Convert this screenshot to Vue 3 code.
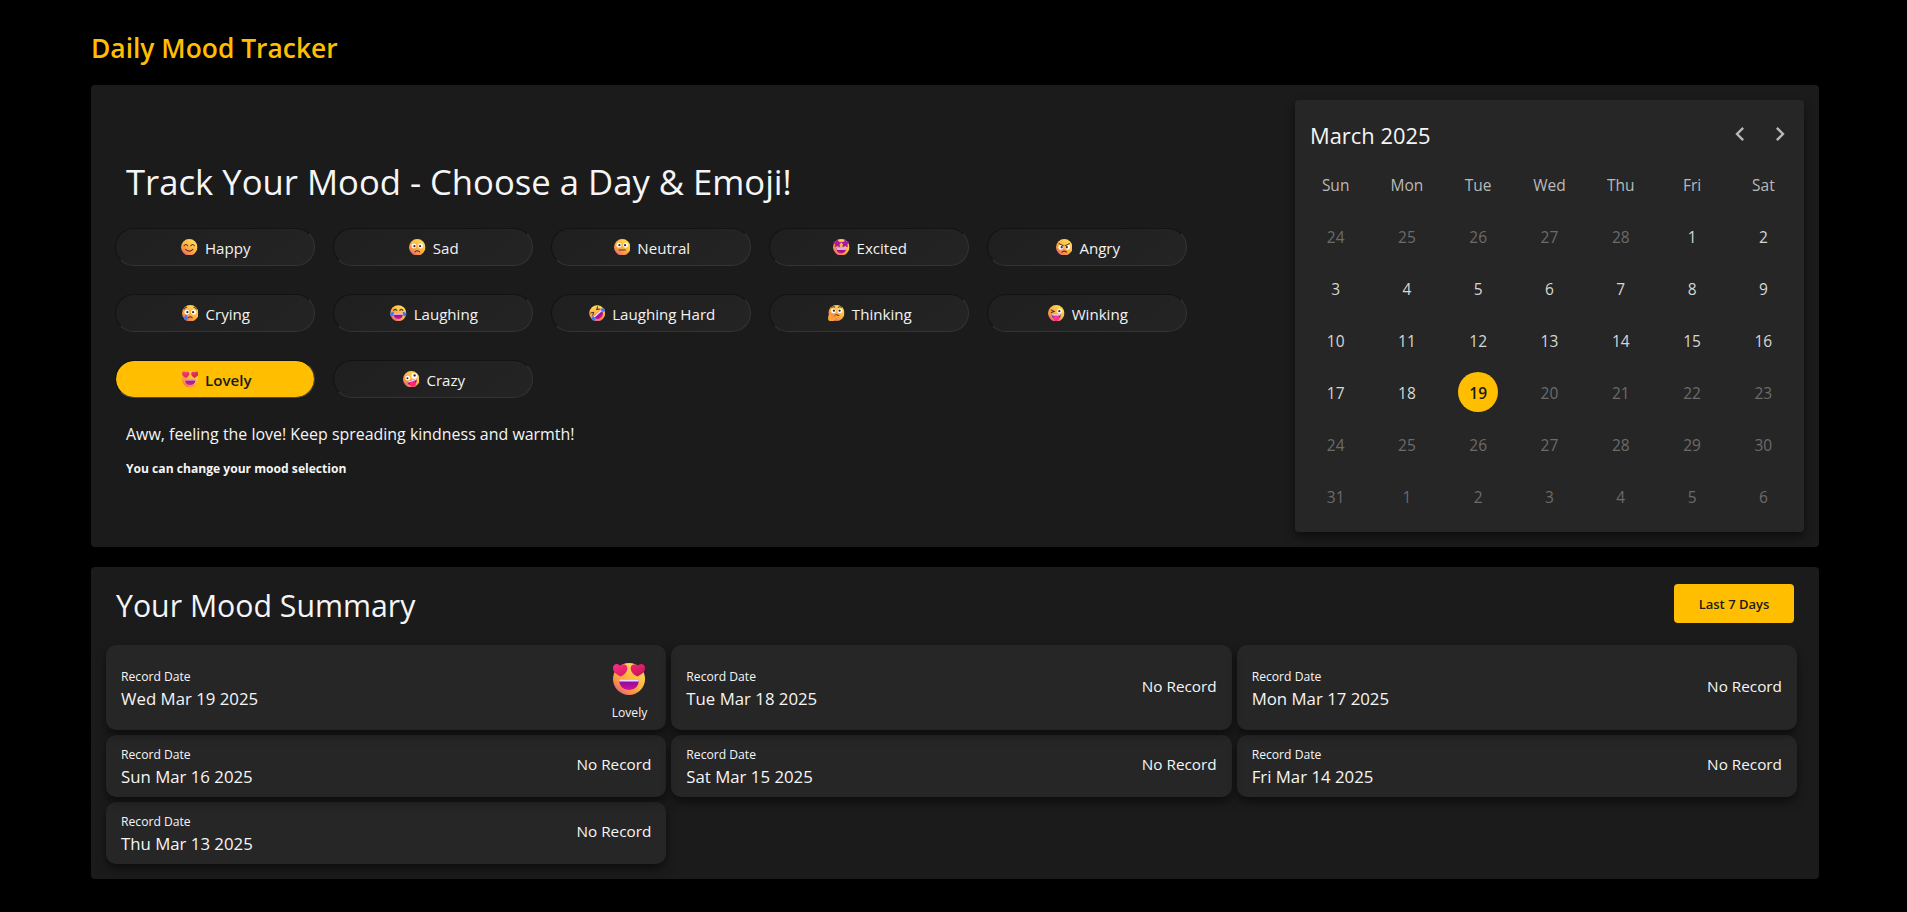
<script setup>
import { ref } from 'vue'

const moods = [
  { id: 'happy', name: 'Happy' },
  { id: 'sad', name: 'Sad' },
  { id: 'neutral', name: 'Neutral' },
  { id: 'excited', name: 'Excited' },
  { id: 'angry', name: 'Angry' },
  { id: 'crying', name: 'Crying' },
  { id: 'laughing', name: 'Laughing' },
  { id: 'rofl', name: 'Laughing Hard' },
  { id: 'thinking', name: 'Thinking' },
  { id: 'winking', name: 'Winking' },
  { id: 'lovely', name: 'Lovely' },
  { id: 'crazy', name: 'Crazy' }
]
const selected = ref('lovely')

const weekdays = ['Sun', 'Mon', 'Tue', 'Wed', 'Thu', 'Fri', 'Sat']

const days = Array.from({ length: 42 }, (_, i) => {
  const n = i - 4
  if (n < 1) return { label: n + 28, off: true }
  if (n > 31) return { label: n - 31, off: true }
  return { label: n, off: n > 19, today: n === 19 }
})

const records = [
  { date: 'Wed Mar 19 2025', mood: { id: 'lovely', name: 'Lovely' } },
  { date: 'Tue Mar 18 2025' },
  { date: 'Mon Mar 17 2025' },
  { date: 'Sun Mar 16 2025' },
  { date: 'Sat Mar 15 2025' },
  { date: 'Fri Mar 14 2025' },
  { date: 'Thu Mar 13 2025' }
]
</script>

<template>
  <div class="page">
    <svg class="defs" width="0" height="0" aria-hidden="true">
      <defs>
        <linearGradient id="skin" x1="0.85" y1="0.1" x2="0.2" y2="0.95">
          <stop offset="0" stop-color="#ffdf5c" />
          <stop offset="0.5" stop-color="#ffb23e" />
          <stop offset="0.8" stop-color="#f98c49" />
          <stop offset="1" stop-color="#e0608a" />
        </linearGradient>
        <linearGradient id="mouth" x1="0" y1="0" x2="0" y2="1">
          <stop offset="0" stop-color="#7a0c9c" />
          <stop offset="1" stop-color="#d1109a" />
        </linearGradient>
        <linearGradient id="heart" x1="0" y1="0" x2="1" y2="1">
          <stop offset="0" stop-color="#ff2e8a" />
          <stop offset="1" stop-color="#c4124e" />
        </linearGradient>
        <symbol id="face-happy" viewBox="0 0 32 32">
          <circle cx="16" cy="16" r="16" fill="url(#skin)" />
          <path d="M6 13q3.500-5 7 0M19 13q3.500-5 7 0M9 20q7 7 14 0" class="line" />
        </symbol>
        <symbol id="face-sad" viewBox="0 0 32 32">
          <circle cx="16" cy="16" r="16" fill="url(#skin)" />
          <circle cx="9.500" cy="13.500" r="4.800" fill="#fff" /><circle cx="22.500" cy="13.500" r="4.800" fill="#fff" />
          <circle cx="10.500" cy="14" r="2.200" fill="#402a32" /><circle cx="21.500" cy="14" r="2.200" fill="#402a32" />
          <path d="M11.500 25q4.500-4.500 9 0" class="line" />
        </symbol>
        <symbol id="face-neutral" viewBox="0 0 32 32">
          <circle cx="16" cy="16" r="16" fill="url(#skin)" />
          <circle cx="9.500" cy="12" r="4.800" fill="#fff" /><circle cx="22.500" cy="12" r="4.800" fill="#fff" />
          <circle cx="10.500" cy="12" r="2.200" fill="#402a32" /><circle cx="21.500" cy="12" r="2.200" fill="#402a32" />
          <path d="M10 21.500h12" class="line" />
        </symbol>
        <symbol id="face-excited" viewBox="0 0 32 32">
          <circle cx="16" cy="16" r="16" fill="url(#skin)" />
          <path d="M8.500 1l2.400 4.600 5 .8-3.500 3.800.8 5.300-4.700-2.300-4.800 2.300.8-5.300L0 6.400l5.800-.8zM23.500 1l2.700 4.600 5.800.8-4.500 3.800.8 5.300-4.800-2.300-4.700 2.300.8-5.300-3.500-3.800 5-.8z" fill="#a718ad" stroke="#a718ad" stroke-linejoin="round" />
          <path d="M6.500 18h19q-1 10-9.500 10t-9.500-10z" fill="url(#mouth)" />
          <path d="M7 18h18v2.800H7.600z" fill="#f2dcff" />
        </symbol>
        <symbol id="face-angry" viewBox="0 0 32 32">
          <circle cx="16" cy="16" r="16" fill="url(#skin)" />
          <circle cx="9.500" cy="16" r="4.800" fill="#fff" /><circle cx="22.500" cy="16" r="4.800" fill="#fff" />
          <circle cx="11" cy="16" r="2.200" fill="#402a32" /><circle cx="21" cy="16" r="2.200" fill="#402a32" />
          <path d="M6 9l8 4M26 9l-8 4M11.500 25.500q4.500-4 9 0" class="line" />
        </symbol>
        <symbol id="face-crying" viewBox="0 0 32 32">
          <circle cx="16" cy="16" r="16" fill="url(#skin)" />
          <circle cx="9.500" cy="14" r="4.800" fill="#fff" /><circle cx="22.500" cy="14" r="4.800" fill="#fff" />
          <circle cx="10.500" cy="14" r="2.200" fill="#402a32" /><circle cx="21.500" cy="14" r="2.200" fill="#402a32" />
          <path d="M4 8q2-3 5-3.500M28 8q-2-3-5-3.500M12.500 24.500q3.500-3.500 7 0" class="line" />
          <path d="M7.500 18q5 6.500 3.500 9.500a3.900 3.900 0 0 1-7 0Q3 24.500 7.500 18z" fill="#3c77f2" />
        </symbol>
        <symbol id="face-laughing" viewBox="0 0 32 32">
          <circle cx="16" cy="16" r="15.500" fill="url(#skin)" />
          <path d="M7 10.500q3-4 6 0M19 10.500q3-4 6 0" class="line" />
          <path d="M7 16h18q0 11-9 11T7 16z" fill="url(#mouth)" />
          <path d="M7 16h18v3H7z" fill="#f7dcf0" />
          <path d="M7 13q-8 1.500-7 6 1 4 4.500 2.500T7 13zM25 13q8 1.500 7 6-1 4-4.500 2.500T25 13z" fill="#3c77f2" />
        </symbol>
        <symbol id="face-rofl" viewBox="0 0 32 32">
          <g transform="rotate(-42 16 16)">
            <circle cx="16" cy="16" r="15.500" fill="url(#skin)" />
            <path d="M7 7l5 3-5 3M25 7l-5 3 5 3" class="line" />
            <path d="M6 16h20q0 11-10 11T6 16z" fill="url(#mouth)" />
            <path d="M6 16h20v3H6z" fill="#f7dcf0" />
            <path d="M6 14q-7 2-6 6 1 4 4.500 2.500T6 14zM26 14q7 2 6 6-1 4-4.500 2.500T26 14z" fill="#3c77f2" />
          </g>
        </symbol>
        <symbol id="face-thinking" viewBox="0 0 32 32">
          <circle cx="16.500" cy="15.500" r="15.500" fill="url(#skin)" />
          <circle cx="10.500" cy="11.500" r="4.600" fill="#fff" /><circle cx="23" cy="11.500" r="4.600" fill="#fff" />
          <circle cx="11.500" cy="11" r="2.200" fill="#402a32" /><circle cx="22.500" cy="11" r="2.200" fill="#402a32" />
          <path d="M7 4.500q3-2 6-.5M20 4.500q3-2 6 0M13 20q4-2.500 8 .5" class="line" />
          <path d="M3 18q3-2 3.500 3.500l10.500-1q2 2-1 3.500l-3 1q2 7-6 7-7 0-7-6.500 0-5 3-7.500z" fill="#ffa336" />
          <path d="M7 23l9-1.500" stroke="#e57a3b" stroke-width="1" fill="none" />
        </symbol>
        <symbol id="face-winking" viewBox="0 0 32 32">
          <circle cx="16" cy="16" r="16" fill="url(#skin)" />
          <circle cx="22.500" cy="12" r="4.800" fill="#fff" /><circle cx="22" cy="12" r="2.200" fill="#402a32" />
          <path d="M6 9.500l6 3-5.500 2" class="line" />
          <path d="M7 18h18q0 9-9 9t-9-9z" fill="#74217b" />
          <path d="M10.500 20h11v6.500q0 4.500-5.500 4.500t-5.500-4.500z" fill="#ff3299" />
          <path d="M8 18h16v2.500H8z" fill="#fff0ed" />
        </symbol>
        <symbol id="face-lovely" viewBox="0 0 32 32">
          <circle cx="16" cy="16" r="16" fill="url(#skin)" />
          <path d="M6 16.300h20q-.3 10.700-10 10.700T6 16.300z" fill="url(#mouth)" />
          <path d="M6 16.300h20l-.3 2.200H6.300z" fill="#ecd9ff" />
          <path d="M7.500 13.500C2.500 11 0 8.500 0 5c0-4.500 5.500-5.500 7-2 2.500-3.500 8-1.500 7.300 3-.5 3.500-3 6-6.800 7.500zM24.500 13.500c5-2.500 7.500-5 7.500-8.500 0-4.500-5.500-5.500-7-2-2.500-3.500-8-1.500-7.300 3 .5 3.500 3 6 6.800 7.500z" fill="url(#heart)" />
        </symbol>
        <symbol id="face-crazy" viewBox="0 0 32 32">
          <circle cx="16" cy="16" r="16" fill="url(#skin)" />
          <circle cx="9" cy="14" r="4.600" fill="#fff" /><circle cx="22" cy="9.500" r="5.600" fill="#fff" />
          <circle cx="8.500" cy="14" r="2" fill="#402a32" /><circle cx="22.500" cy="8.500" r="2.300" fill="#402a32" />
          <g transform="rotate(-18 17 20)">
            <path d="M8 18h19q0 9-9.500 9T8 18z" fill="#8c1589" />
            <path d="M12 20h11v6q0 5-5.500 5T12 26z" fill="#ff247f" />
            <path d="M8.500 18h18v2.300h-18z" fill="#f7d9ff" />
          </g>
        </symbol>
      </defs>
    </svg>

    <h1 class="brand">Daily Mood Tracker</h1>

    <section class="panel tracker">
      <div class="picker">
        <h2 class="heading">Track Your Mood - Choose a Day &amp; Emoji!</h2>
        <div class="moods">
          <button
            v-for="m in moods"
            :key="m.id"
            type="button"
            class="mood"
            :class="{ active: m.id === selected }"
            @click="selected = m.id"
          >
            <svg class="face"><use :href="'#face-' + m.id" /></svg>
            <span>{{ m.name }}</span>
          </button>
        </div>
        <p class="message">Aww, feeling the love! Keep spreading kindness and warmth!</p>
        <p class="hint">You can change your mood selection</p>
      </div>

      <div class="calendar">
        <div class="cal-head">
          <span class="month">March 2025</span>
          <div class="arrows">
            <svg viewBox="0 0 24 24"><path d="M15.410 7.410 14 6l-6 6 6 6 1.410-1.410L10.830 12z" /></svg>
            <svg viewBox="0 0 24 24"><path d="M10 6 8.590 7.410 13.170 12l-4.580 4.590L10 18l6-6z" /></svg>
          </div>
        </div>
        <div class="cal-grid">
          <div v-for="w in weekdays" :key="w" class="cell weekday">{{ w }}</div>
          <div v-for="(d, i) in days" :key="i" class="cell" :class="{ off: d.off }">
            <span class="day" :class="{ today: d.today }">{{ d.label }}</span>
          </div>
        </div>
      </div>
    </section>

    <section class="panel summary">
      <div class="summary-head">
        <h2 class="summary-title">Your Mood Summary</h2>
        <button type="button" class="range">Last 7 Days</button>
      </div>
      <div class="cards">
        <article v-for="r in records" :key="r.date" class="card">
          <div class="when">
            <div class="label">Record Date</div>
            <div class="date">{{ r.date }}</div>
          </div>
          <div v-if="r.mood" class="result">
            <svg class="face-big"><use :href="'#face-' + r.mood.id" /></svg>
            <span class="result-name">{{ r.mood.name }}</span>
          </div>
          <div v-else class="none">No Record</div>
        </article>
      </div>
    </section>
  </div>
</template>

<style>
html,
body {
  background: #000;
}
</style>

<style scoped>
.page {
  box-sizing: border-box;
  min-height: 912px;
  padding: 24px 88px 33px 91px;
  background: #000;
  color: #f5f5f5;
  font-family: 'Open Sans', 'Noto Sans', sans-serif;
}
.page * {
  box-sizing: border-box;
}
.defs {
  position: absolute;
}
h1,
h2,
p {
  margin: 0;
}
button {
  font-family: inherit;
  border: 0;
  padding: 0;
  cursor: pointer;
}
.line {
  fill: none;
  stroke: #50303a;
  stroke-width: 2;
  stroke-linecap: round;
}
.brand {
  margin-bottom: 13px;
  color: #ffbf00;
  font-size: 26.400px;
  font-weight: 600;
  line-height: 48px;
}
.panel {
  background: #1b1b1b;
  border-radius: 4px;
}
.tracker {
  display: flex;
  justify-content: space-between;
  height: 462px;
  padding: 15px;
}
.picker {
  width: 1082px;
  padding: 58px 0 0 9px;
}
.heading {
  margin-left: 11px;
  font-size: 34.650px;
  font-weight: 400;
  line-height: 48px;
}
.moods {
  display: grid;
  grid-template-columns: repeat(5, 200px);
  column-gap: 18px;
  row-gap: 28px;
  margin-top: 22px;
}
.mood {
  display: flex;
  align-items: center;
  justify-content: center;
  height: 38px;
  padding: 0 0 0 2px;
  border: 1px solid;
  border-color: #131313 #343434 #343434 #131313;
  border-radius: 20px;
  background: linear-gradient(145deg, #1f1f1f, #242424);
  color: #f2f2f2;
  font-size: 15.100px;
  line-height: 24px;
}
.mood.active {
  padding-left: 3px;
  border-color: #131313 #4a4a4a #4a4a4a #131313;
  background: #ffbf00;
  background-clip: padding-box;
  color: #1a1a1a;
  font-weight: 600;
}
.face {
  width: 16.500px;
  height: 16.500px;
  margin-right: 7px;
}
.mood span {
  padding-top: 2px;
}
.active .face {
  opacity: 0.9;
}
.message {
  margin: 24px 0 0 11px;
  font-size: 15.950px;
  line-height: 24px;
}
.hint {
  margin: 13px 0 0 11px;
  font-size: 12.100px;
  font-weight: 700;
  line-height: 20px;
}
.calendar {
  width: 509px;
  height: 432px;
  padding: 0 5px;
  border-radius: 4px;
  background: rgba(255, 255, 255, 0.05);
  box-shadow: 0 5px 10px rgba(0, 0, 0, 0.5);
}
.cal-head {
  display: flex;
  align-items: flex-start;
  justify-content: space-between;
  height: 58px;
  padding: 20px 5px 0 10px;
}
.month {
  font-size: 21.900px;
  line-height: 31px;
}
.arrows {
  display: flex;
  gap: 12px;
}
.arrows svg {
  width: 28px;
  height: 28px;
  fill: #b9b9b9;
}
.cal-grid {
  display: grid;
  grid-template-columns: repeat(7, 1fr);
  grid-auto-rows: 52px;
}
.cell {
  display: flex;
  align-items: center;
  justify-content: center;
  color: #d6d6d6;
  font-size: 15.500px;
}
.weekday {
  padding-top: 2px;
  color: #b9b9b9;
}
.off {
  color: #6b6b6b;
}
.day {
  width: 40px;
  height: 40px;
  border-radius: 50%;
  line-height: 43px;
  text-align: center;
}
.today {
  background: #ffbf00;
  color: #1b1b1b;
  font-weight: 600;
}
.summary {
  height: 312px;
  margin-top: 20px;
  padding: 17px 22px 0 15px;
}
.summary-head {
  display: flex;
  align-items: center;
  justify-content: space-between;
  height: 39px;
  margin-bottom: 22px;
  padding: 0 3px 0 10px;
}
.summary-title {
  padding-top: 4px;
  font-size: 30.250px;
  font-weight: 400;
  line-height: 44px;
}
.range {
  width: 120px;
  height: 39px;
  border-radius: 4px;
  background: #ffbf00;
  color: #1b1b1b;
  font-size: 13px;
  font-weight: 600;
}
.cards {
  display: grid;
  grid-template-columns: repeat(3, 1fr);
  gap: 5px;
}
.card {
  display: flex;
  align-items: center;
  justify-content: space-between;
  min-height: 62px;
  padding: 0 15px;
  border-radius: 10px;
  background: rgba(255, 255, 255, 0.05);
  box-shadow: 0 5px 10px rgba(0, 0, 0, 0.5);
}
.card:first-child {
  height: 85px;
}
.when {
  padding-top: 4px;
}
.label {
  font-size: 12.150px;
  line-height: 18px;
}
.date {
  font-size: 16.800px;
  line-height: 26px;
}
.none {
  padding-bottom: 4px;
  font-size: 15.300px;
  line-height: 24px;
}
.result {
  display: flex;
  flex-direction: column;
  align-items: center;
  padding: 10px 4px 0 0;
}
.face-big {
  width: 32px;
  height: 32px;
}
.result-name {
  margin-top: 9px;
  font-size: 12.150px;
  line-height: 18px;
}
</style>
